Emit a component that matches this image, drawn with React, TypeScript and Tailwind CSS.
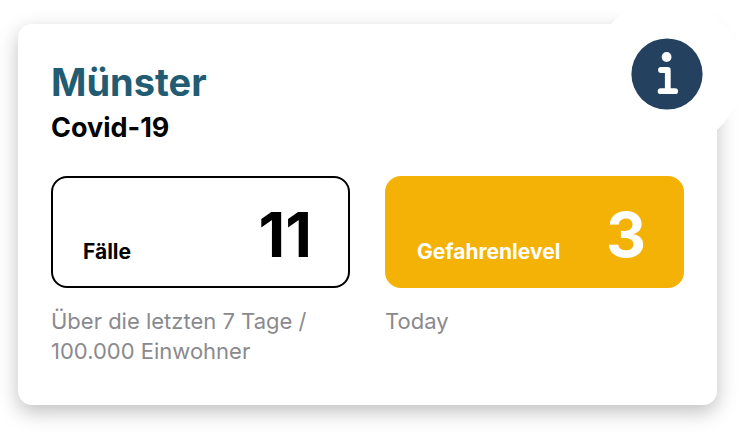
import React from "react";

function InfoIcon() {
  return (
    <svg viewBox="0 0 72 72" className="size-18" aria-hidden="true">
      <circle cx="36" cy="36" r="35.6" fill="#24415f" />
      <circle cx="35.6" cy="19" r="4.9" fill="#fff" />
      <path
        d="M30 32H36.8V53.2M29.6 53.2H44.2"
        fill="none"
        stroke="#fff"
        strokeWidth="5.8"
        strokeLinecap="round"
        strokeLinejoin="round"
      />
    </svg>
  );
}

type StatProps = {
  label: string;
  value: string;
  note: string;
  tone: string;
};

function Stat({ label, value, note, tone }: StatProps) {
  return (
    <div>
      <dl
        className={`flex h-28 items-end justify-between rounded-2xl border-2 pr-9 pb-5 pl-[30px] font-bold ${tone}`}
      >
        <dt className="text-[21px] leading-7">{label}</dt>
        <dd className="text-[62px] leading-[62px]">{value}</dd>
      </dl>
      <p className="mt-[18px] text-[22px] leading-[30px] text-[#8a8a8e]">{note}</p>
    </div>
  );
}

export default function App() {
  return (
    <main className="overflow-hidden bg-white pt-6 pr-6 pb-[27px] pl-[18px] font-['Inter',sans-serif] text-black">
      <section className="relative rounded-[14px] bg-white px-[33px] pt-9 pb-[39px] shadow-[0_7px_20px_rgba(0,0,0,0.25)]">
        <button
          type="button"
          aria-label="Information"
          className="absolute -top-[25px] -right-[25px] flex size-[150px] items-center justify-center rounded-full bg-white"
        >
          <InfoIcon />
        </button>
        <h1 className="text-[38px] leading-[44px] font-bold text-[#225c73]">Münster</h1>
        <h2 className="mt-1.5 text-[27px] leading-9 font-bold">Covid-19</h2>
        <div className="mt-[30px] grid grid-cols-2 gap-[35px]">
          <Stat
            label="Fälle"
            value="11"
            note="Über die letzten 7 Tage / 100.000 Einwohner"
            tone="border-black"
          />
          <Stat
            label="Gefahrenlevel"
            value="3"
            note="Today"
            tone="border-[#f5b206] bg-[#f5b206] text-white"
          />
        </div>
      </section>
    </main>
  );
}
